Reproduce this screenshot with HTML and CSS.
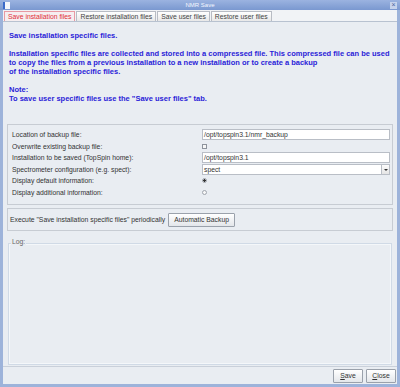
FILE: index.html
```html
<!DOCTYPE html>
<html lang="en">
<head>
    <meta charset="UTF-8">
    <title>NMR Save</title>
    <link rel="stylesheet" href="styles.css">
</head>
<body>
    <div class="janela">
        <div class="titulo">
            <span class="icone"></span>
            <span class="nome">NMR Save</span>
            <span class="fechar">×</span>
        </div>
        <div class="abas">
            <span class="aba ativa">Save installation files</span>
            <span class="aba">Restore installation files</span>
            <span class="aba">Save user files</span>
            <span class="aba">Restore user files</span>
        </div>
        <div class="conteudo">
            <div class="info">
                <p>Save installation specific files.</p>
                <br>
                <p>Installation specific files are collected and stored into a compressed file. This compressed file can be used<br>
                to copy the files from a previous installation to a new installation or to create a backup<br>
                of the installation specific files.</p>
                <br>
                <p>Note:<br>To save user specific files use the "Save user files" tab.</p>
            </div>
            <div class="painel formulario">
                <div class="linha">
                    <label>Location of backup file:</label>
                    <div class="campo">/opt/topspin3.1/nmr_backup</div>
                </div>
                <div class="linha">
                    <label>Overwrite existing backup file:</label>
                    <span class="check"></span>
                </div>
                <div class="linha">
                    <label>Installation to be saved (TopSpin home):</label>
                    <div class="campo">/opt/topspin3.1</div>
                </div>
                <div class="linha">
                    <label>Spectrometer configuration (e.g. spect):</label>
                    <div class="campo combo">spect<span class="seta"></span></div>
                </div>
                <div class="linha">
                    <label>Display default information:</label>
                    <span class="radio marcado"></span>
                </div>
                <div class="linha">
                    <label>Display additional information:</label>
                    <span class="radio"></span>
                </div>
            </div>
            <div class="painel periodico">
                <span>Execute "Save installation specific files" periodically</span>
                <span class="botao">Automatic Backup</span>
            </div>
            <div class="log">
                <span class="legenda">Log:</span>
            </div>
        </div>
        <div class="rodape">
            <span class="botao"><u>S</u>ave</span>
            <span class="botao"><u>C</u>lose</span>
        </div>
    </div>
</body>
</html>
```

FILE: styles.css
```css
* {
    margin: 0;
    padding: 0;
    box-sizing: border-box;
}
body {
    width: 400px;
    height: 387px;
    background-color: #a8b4c4;
    font-family: "Liberation Sans", Arial, sans-serif;
    font-size: 6.8px;
    color: #333;
}
.janela {
    height: 387px;
    display: flex;
    flex-direction: column;
    background-color: #e9edf2;
    border-left: 3px solid #9db3da;
    border-right: 3px solid #9db3da;
    border-bottom: 3px solid #9db3da;
}
.titulo {
    height: 10px;
    margin: 0 -3px;
    background: linear-gradient(#9bb3e0, #7a98d0);
    display: flex;
    align-items: center;
    padding: 0 3px;
    color: #f4f7ff;
}
.icone {
    width: 7px;
    height: 7px;
    background-color: #f4f6fb;
    border-left: 2px solid #3b6ac8;
}
.nome {
    flex: 1;
    text-align: center;
    font-size: 6px;
}
.fechar {
    width: 7px;
    height: 7px;
    line-height: 6px;
    text-align: center;
    font-size: 7px;
    background-color: #c6d3ec;
    color: #4a63a0;
}
.abas {
    display: flex;
    gap: 1px;
    padding: 1px 1px 0;
    height: 12px;
    border-bottom: 1px solid #b8c2d0;
    background-color: #f1f3f6;
}
.aba {
    border: 1px solid #b8bcc4;
    border-bottom: none;
    background: linear-gradient(#ffffff, #e8e8e8);
    padding: 0 3px;
    line-height: 10px;
    font-size: 6.8px;
    color: #444;
}
.aba.ativa {
    color: #e0303a;
    border-color: #e89aa4;
    background: #f6eef0;
}
.conteudo {
    flex: 1;
    display: flex;
    flex-direction: column;
    padding: 0 4px;
    border-bottom: 1px solid #c9d0da;
}
.info {
    color: #2a22d8;
    font-weight: bold;
    font-size: 7.5px;
    line-height: 9px;
    padding: 9px 2px 0;
    height: 102px;
}
.painel {
    border: 1px solid #c7ccd3;
    background-color: #e9edf2;
}
.formulario {
    padding: 4px 2px 6px;
}
.linha {
    display: flex;
    align-items: center;
    height: 11.5px;
}
.linha label {
    width: 192px;
    padding-left: 2px;
}
.campo {
    flex: 1;
    height: 11px;
    background-color: #fff;
    border: 1px solid #b9bec6;
    padding-left: 1px;
    line-height: 9px;
}
.combo {
    display: flex;
    justify-content: space-between;
}
.seta {
    width: 8px;
    border-left: 1px solid #b9bec6;
    background: linear-gradient(#fdfdfd, #e4e4e4);
    position: relative;
}
.seta::after {
    content: "";
    position: absolute;
    left: 2px;
    top: 4px;
    border-left: 2px solid transparent;
    border-right: 2px solid transparent;
    border-top: 2px solid #333;
}
.check {
    width: 5px;
    height: 5px;
    border: 1px solid #8d939c;
    background-color: #f6f6f6;
}
.radio {
    width: 5px;
    height: 5px;
    border: 1px solid #a0a5ad;
    border-radius: 50%;
    background-color: #f8f8f8;
}
.radio.marcado {
    background: radial-gradient(#333 0 1.2px, #f8f8f8 1.5px);
}
.periodico {
    margin-top: 3px;
    height: 23px;
    display: flex;
    align-items: center;
    gap: 3px;
    padding-left: 2px;
}
.botao {
    border: 1px solid #9aa1ab;
    background: linear-gradient(#ffffff, #e3e6ea);
    padding: 0 5px;
    line-height: 12px;
    border-radius: 1px;
    color: #333;
}
.log {
    flex: 1;
    margin: 12px 1px 1px;
    border: 1px solid #d0dae6;
    box-shadow: inset 0 0 0 1px #f4f7fa;
    position: relative;
}
.legenda {
    position: absolute;
    top: -6px;
    left: 2px;
    background-color: #e9edf2;
    padding: 0 1px;
    color: #666;
}
.rodape {
    height: 17px;
    display: flex;
    justify-content: flex-end;
    align-items: center;
    gap: 3px;
    padding-right: 1px;
}
.rodape .botao {
    width: 30px;
    padding: 0;
    text-align: center;
}
```
